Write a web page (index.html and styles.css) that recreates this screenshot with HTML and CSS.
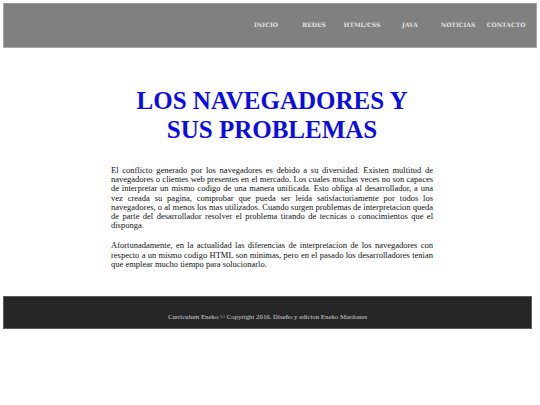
FILE: index.html
```html
<!DOCTYPE html>
<html lang="es">
<head>
<meta charset="utf-8">
<title>Los navegadores y sus problemas</title>
<link rel="stylesheet" href="styles.css">
</head>
<body>
<header class="site-header">
  <nav class="nav">
    <ul class="nav-list">
      <li class="nav-item"><a href="#">INICIO</a></li>
      <li class="nav-item"><a href="#">REDES</a></li>
      <li class="nav-item"><a href="#">HTML/CSS</a></li>
      <li class="nav-item"><a href="#">JAVA</a></li>
      <li class="nav-item"><a href="#">NOTICIAS</a></li>
      <li class="nav-item"><a href="#">CONTACTO</a></li>
    </ul>
  </nav>
</header>
<main class="content">
  <h1 class="title"><span class="title-line">LOS NAVEGADORES Y</span><span class="title-line">SUS PROBLEMAS</span></h1>
  <p class="text">El conflicto generado por los navegadores es debido a su diversidad. Existen multitud de navegadores o clientes web presentes en el mercado. Los cuales muchas veces no son capaces de interpretar un mismo codigo de una manera unificada. Esto obliga al desarrollador, a una vez creada su pagina, comprobar que pueda ser leida satisfactoriamente por todos los navegadores, o al menos los mas utilizados. Cuando surgen problemas de interpretacion queda de parte del desarrollador resolver el problema tirando de tecnicas o conocimientos que el disponga.</p>
  <p class="text">Afortunadamente, en la actualidad las diferencias de interpretacion de los navegadores con respecto a un mismo codigo HTML son minimas, pero en el pasado los desarrolladores tenian que emplear mucho tiempo para solucionarlo.</p>
</main>
<footer class="site-footer">
  <p class="footer-text">Curriculum Eneko © Copyright 2016. Diseño y edicion Eneko Mardones</p>
</footer>
</body>
</html>
```
FILE: styles.css
```css
html, body {
  margin: 0;
  padding: 0;
  background: #ffffff;
}

body {
  font-family: "Liberation Serif", serif;
}

.site-header {
  margin: 3px 3px 0 3px;
  height: 45px;
  box-sizing: border-box;
  background: #808080;
  border: 1px solid #a8a8a8;
  border-top-color: #999999;
  display: flex;
  align-items: center;
  justify-content: flex-end;
  padding-right: 6px;
  padding-bottom: 5px;
}

.nav-list {
  list-style: none;
  margin: 0;
  padding: 0;
  display: flex;
}

.nav-item {
  width: 48px;
  text-align: center;
  line-height: 8px;
}

.nav-item a {
  font-family: "DejaVu Serif", serif;
  font-weight: bold;
  font-size: 6px;
  color: #e2e2e2;
  text-decoration: none;
  white-space: nowrap;
}

.content {
  width: 322px;
  margin-left: 111px;
  padding-top: 38px;
  padding-bottom: 16px;
}

.title {
  margin: 0 -40px 22px -40px;
  font-family: "Liberation Serif";
  font-weight: bold;
  font-size: 25px;
  text-align: center;
  color: #0b0be8;
  font-synthesis: none;
}

.title-line {
  display: block;
  height: 29px;
  line-height: 29px;
  font-family: "Liberation Serif";
  font-weight: bold;
}

.text {
  margin: 0 0 11px 0;
  font-size: 8.5px;
  line-height: 9.2px;
  text-align: justify;
  color: #111111;
}

.site-footer {
  margin: 0 8px 0 3px;
  height: 33px;
  box-sizing: border-box;
  background: #262626;
  border: 1px solid #5c5c5c;
  padding-top: 16px;
}

.footer-text {
  margin: 0;
  font-size: 6.8px;
  line-height: 8px;
  text-align: center;
  color: #d0d0d0;
}
```
